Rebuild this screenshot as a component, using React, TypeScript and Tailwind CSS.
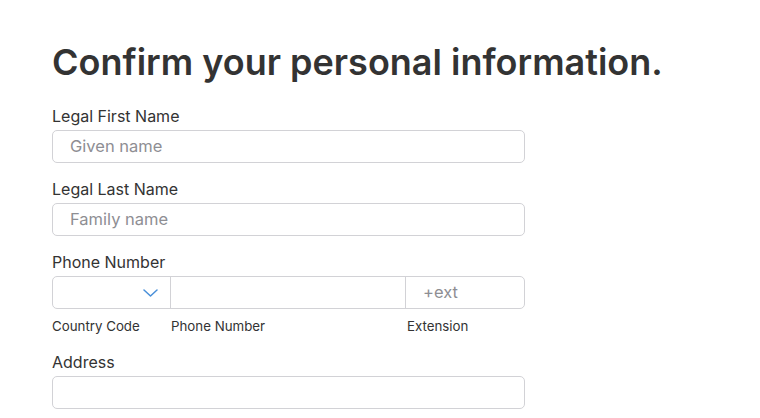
import React from "react";

const font = { fontFamily: "Inter, 'Liberation Sans', sans-serif" };

function Label({ children }: { children: React.ReactNode }) {
  return <div className="text-[16px] leading-[20px] text-[#333333] h-[20px]">{children}</div>;
}

function TextInput({ placeholder }: { placeholder?: string }) {
  return (
    <div className="mt-[4px] h-[33px] w-[473px] rounded-[5px] border border-[#d2d2d6] bg-white flex items-center pl-[17px] text-[16.5px] text-[#8e8e93]">
      {placeholder}
    </div>
  );
}

export default function App() {
  return (
    <div className="w-[760px] h-[418px] bg-white overflow-hidden" style={font}>
      <div className="pl-[52px] pt-[40px]">
        <h1 className="text-[36px] leading-[44px] font-semibold text-[#333333] h-[44px]">
          Confirm your personal information.
        </h1>
        <div className="mt-[22px]">
          <Label>Legal First Name</Label>
          <TextInput placeholder="Given name" />
        </div>
        <div className="mt-[16px]">
          <Label>Legal Last Name</Label>
          <TextInput placeholder="Family name" />
        </div>
        <div className="mt-[16px]">
          <Label>Phone Number</Label>
          <div className="mt-[4px] h-[33px] w-[473px] rounded-[5px] border border-[#d2d2d6] bg-white flex">
            <div className="w-[118px] border-r border-[#d2d2d6] flex items-center justify-end pr-[12px]">
              <svg width="15" height="8" viewBox="0 0 15 8" fill="none">
                <path d="M1 1L7.5 7L14 1" stroke="#4a90d9" strokeWidth="1.5" strokeLinecap="round" strokeLinejoin="round" />
              </svg>
            </div>
            <div className="w-[235px] border-r border-[#d2d2d6]" />
            <div className="flex-1 flex items-center pl-[17px] text-[16.5px] text-[#8e8e93]">+ext</div>
          </div>
          <div className="flex mt-[8px] text-[13.3px] leading-[18px] text-[#333333] h-[18px]">
            <div className="w-[119px]">Country Code</div>
            <div className="w-[236px]">Phone Number</div>
            <div>Extension</div>
          </div>
        </div>
        <div className="mt-[17px]">
          <Label>Address</Label>
          <TextInput />
        </div>
      </div>
    </div>
  );
}
